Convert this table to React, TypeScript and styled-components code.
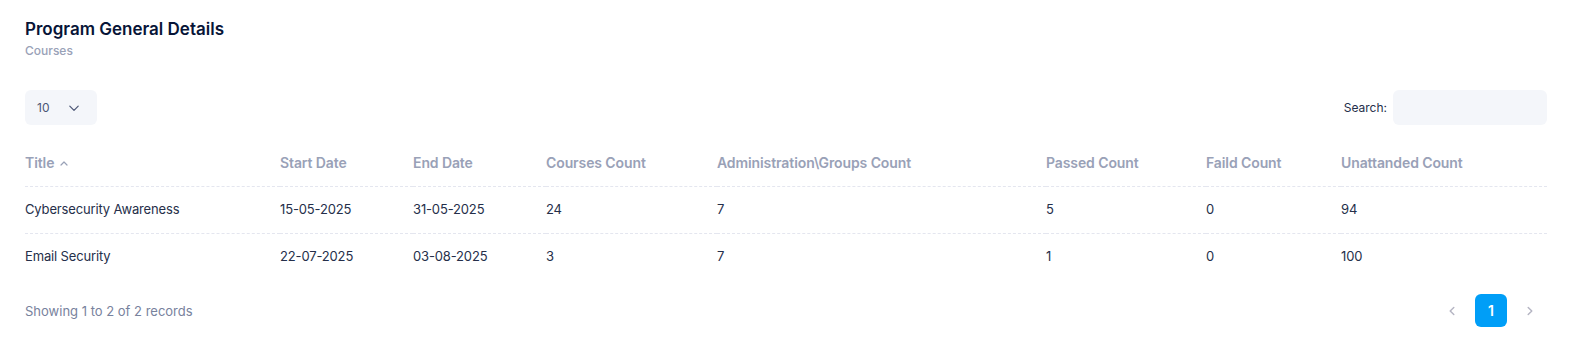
import * as React from 'react';
import styled, { createGlobalStyle } from 'styled-components';

interface Program {
  title: string;
  start: string;
  end: string;
  courses: number;
  groups: number;
  passed: number;
  failed: number;
  unattended: number;
}

const rows: Program[] = [
  { title: 'Cybersecurity Awareness', start: '15-05-2025', end: '31-05-2025', courses: 24, groups: 7, passed: 5, failed: 0, unattended: 94 },
  { title: 'Email Security', start: '22-07-2025', end: '03-08-2025', courses: 3, groups: 7, passed: 1, failed: 0, unattended: 100 },
];

const columns = ['Title', 'Start Date', 'End Date', 'Courses Count', 'Administration\\Groups Count', 'Passed Count', 'Faild Count', 'Unattanded Count'];

const GlobalStyle = createGlobalStyle`
  body {
    margin: 0;
    background: #ffffff;
    font-family: Inter, "Open Sans", sans-serif;
  }
`;

const Chevron: React.FC<{ dir: 'up' | 'down' | 'left' | 'right'; size?: number; color?: string; weight?: number }> = ({
  dir,
  size = 10,
  color = '#4B5675',
  weight = 1.2,
}) => {
  const paths = {
    up: 'M2 7 L5 4 L8 7',
    down: 'M1.5 3.5 L5 7 L8.5 3.5',
    left: 'M6.5 2 L3.5 5 L6.5 8',
    right: 'M3.5 2 L6.5 5 L3.5 8',
  };
  return (
    <svg width={size} height={size} viewBox="0 0 10 10" fill="none">
      <path d={paths[dir]} stroke={color} strokeWidth={weight} strokeLinecap="round" strokeLinejoin="round" />
    </svg>
  );
};

const App: React.FC = () => {
  return (
    <Card>
      <GlobalStyle />
      <Header>
        <h3>Program General Details</h3>
        <span>Courses</span>
      </Header>
      <Toolbar>
        <PageSize>
          10
          <Chevron dir="down" size={12} color="#4B5675" weight={1} />
        </PageSize>
        <SearchBox>
          Search:
          <input type="text" />
        </SearchBox>
      </Toolbar>
      <Table>
        <thead>
          <tr>
            {columns.map((c, i) => (
              <Th key={c}>
                {c}
                {i === 0 && (
                  <SortIcon>
                    <Chevron dir="up" size={10} color="#99A1B7" />
                  </SortIcon>
                )}
              </Th>
            ))}
          </tr>
        </thead>
        <tbody>
          {rows.map((r) => (
            <tr key={r.title}>
              <Td>{r.title}</Td>
              <Td>{r.start}</Td>
              <Td>{r.end}</Td>
              <Td>{r.courses}</Td>
              <Td>{r.groups}</Td>
              <Td>{r.passed}</Td>
              <Td>{r.failed}</Td>
              <Td>{r.unattended}</Td>
            </tr>
          ))}
        </tbody>
      </Table>
      <Footer>
        <span>Showing 1 to 2 of 2 records</span>
        <Pager>
          <PageArrow>
            <Chevron dir="left" size={12} color="#B5B5C3" />
          </PageArrow>
          <PageButton active>1</PageButton>
          <PageArrow>
            <Chevron dir="right" size={12} color="#B5B5C3" />
          </PageArrow>
        </Pager>
      </Footer>
    </Card>
  );
};

const Card = styled.div`
  padding: 17px 25px 20px;
  background: #fff;
`;

const Header = styled.div`
  display: flex;
  flex-direction: column;
  h3 {
    margin: 0;
    font-size: 17px;
    font-weight: 600;
    color: #071437;
    line-height: 25px;
  }
  span {
    font-size: 12px;
    font-weight: 500;
    color: #99A1B7;
    line-height: 18px;
  }
`;

const Toolbar = styled.div`
  display: flex;
  align-items: center;
  justify-content: space-between;
  margin-top: 30px;
`;

const PageSize = styled.div`
  width: 72px;
  height: 35px;
  box-sizing: border-box;
  padding: 0 17px 0 12px;
  display: flex;
  align-items: center;
  justify-content: space-between;
  background: #F4F6FA;
  border-radius: 6px;
  font-size: 12px;
  color: #4B5675;
`;

const SearchBox = styled.label`
  display: flex;
  align-items: center;
  gap: 6px;
  font-size: 12px;
  color: #252F4A;
  input {
    width: 154px;
    height: 35px;
    box-sizing: border-box;
    border: none;
    outline: none;
    background: #F4F6FA;
    border-radius: 6px;
  }
`;

const Table = styled.table`
  width: 100%;
  margin-top: 16px;
  border-collapse: collapse;
  table-layout: fixed;
  th:nth-child(1) { width: 255px; }
  th:nth-child(2) { width: 133px; }
  th:nth-child(3) { width: 133px; }
  th:nth-child(4) { width: 171px; }
  th:nth-child(5) { width: 329px; }
  th:nth-child(6) { width: 160px; }
  th:nth-child(7) { width: 135px; }
  tr {
    border-bottom: 1px dashed #E4E6EF;
  }
  tbody tr:last-child {
    border-bottom: none;
  }
`;

const Th = styled.th`
  text-align: left;
  padding: 12px 0 13px;
  font-size: 14px;
  font-weight: 600;
  line-height: 20px;
  color: #99A1B7;
  white-space: nowrap;
  letter-spacing: -0.1px;
`;

const SortIcon = styled.span`
  display: inline-flex;
  margin-left: 5px;
`;

const Td = styled.td`
  padding: 12px 0 13px;
  font-size: 13px;
  line-height: 21px;
  color: #252F4A;
  letter-spacing: -0.15px;
`;

const Footer = styled.div`
  display: flex;
  align-items: center;
  justify-content: space-between;
  margin-top: 14px;
  margin-right: 1px;
  font-size: 13px;
  color: #78829D;
`;

const Pager = styled.div`
  display: flex;
  align-items: center;
  gap: 7px;
`;

const PageArrow = styled.div`
  width: 32px;
  height: 33px;
  display: flex;
  align-items: center;
  justify-content: center;
`;

const PageButton = styled.div<{ active?: boolean }>`
  width: 32px;
  height: 33px;
  border-radius: 6px;
  display: flex;
  align-items: center;
  justify-content: center;
  font-size: 14px;
  font-weight: 600;
  background: ${({ active }) => (active ? '#009EF7' : 'transparent')};
  color: ${({ active }) => (active ? '#ffffff' : '#4B5675')};
`;

export default App;
